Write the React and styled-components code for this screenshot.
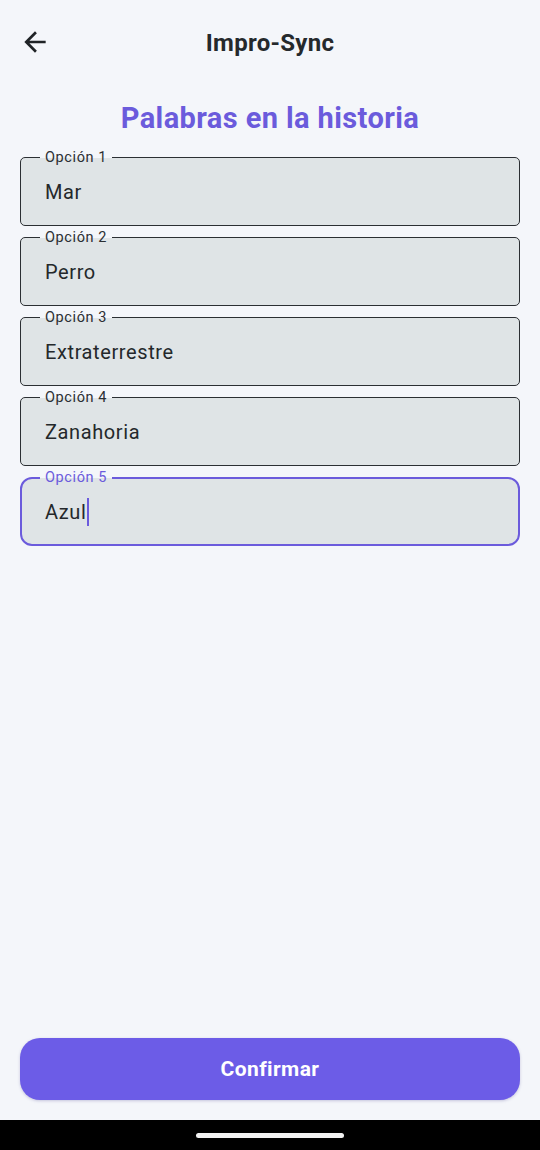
import React from 'react';
import styled, { createGlobalStyle } from 'styled-components';

const GlobalStyle = createGlobalStyle`
    html, body {
        margin: 0;
        padding: 0;
        background-color: #f4f6fa;
        font-family: Roboto, "Noto Sans", sans-serif;
    }
`;

const Screen = styled.div`
    width: 540px;
    height: 1150px;
    display: flex;
    flex-direction: column;
    background-color: #f4f6fa;
    overflow: hidden;
`;

const AppBar = styled.div`
    height: 86px;
    display: flex;
    align-items: center;
    position: relative;
    justify-content: center;
`;

const BackButton = styled.button`
    position: absolute;
    left: 19px;
    top: 26px;
    width: 32px;
    height: 32px;
    padding: 0;
    border: none;
    background: transparent;
    display: flex;
    color: #1f2326;
`;

const AppTitle = styled.h1`
    margin: 0;
    font-size: 24px;
    font-weight: 700;
    color: #25292c;
    letter-spacing: 0.3px;
`;

const Content = styled.div`
    flex: 1;
    display: flex;
    flex-direction: column;
    padding: 0 20px;
`;

const Heading = styled.h2`
    margin: 14px 0 0;
    text-align: center;
    font-size: 29px;
    font-weight: 700;
    color: #6b5bdc;
    line-height: 36px;
    letter-spacing: 0.4px;
`;

const Fields = styled.div`
    display: flex;
    flex-direction: column;
    gap: 11px;
    margin-top: 21px;
`;

const Field = styled.div`
    position: relative;
    height: 69px;
    box-sizing: border-box;
    border: ${(p) => (p.focused ? '2px solid #6b5bdc' : '1px solid #2b2f33')};
    border-radius: ${(p) => (p.focused ? '12px' : '5px')};
    background-color: #dfe4e6;
    display: flex;
    align-items: center;
    padding-left: ${(p) => (p.focused ? '23px' : '24px')};
`;

const Label = styled.span`
    position: absolute;
    top: ${(p) => (p.focused ? '-10px' : '-9px')};
    left: ${(p) => (p.focused ? '18px' : '19px')};
    padding: 0 5px;
    font-size: 14.5px;
    line-height: 18px;
    letter-spacing: 0.6px;
    color: ${(p) => (p.focused ? '#6b5bdc' : '#2b2f33')};
    background: linear-gradient(to bottom, #f4f6fa 50%, #dfe4e6 50%);
`;

const Value = styled.span`
    font-size: 20px;
    color: #24282b;
    letter-spacing: 0.6px;
    display: flex;
    align-items: center;
`;

const Cursor = styled.span`
    display: inline-block;
    width: 2px;
    height: 28px;
    margin-left: 1px;
    background-color: #6b5bdc;
`;

const Footer = styled.div`
    padding: 0 20px 20px;
`;

const ConfirmButton = styled.button`
    width: 100%;
    height: 62px;
    border: none;
    border-radius: 20px;
    background-color: #6c5ce7;
    color: #ffffff;
    font-family: Roboto, sans-serif;
    font-size: 21px;
    font-weight: 700;
    letter-spacing: 0.4px;
    box-shadow: 0 1px 3px rgba(60, 50, 140, 0.25);
`;

const NavBar = styled.div`
    height: 30px;
    background-color: #000;
    display: flex;
    align-items: center;
    justify-content: center;
`;

const Handle = styled.div`
    width: 148px;
    height: 5px;
    border-radius: 3px;
    background-color: #f2f2f2;
`;

const options = ['Mar', 'Perro', 'Extraterrestre', 'Zanahoria', 'Azul'];

const App = () => {
    return (
        <Screen>
            <GlobalStyle />
            <AppBar>
                <BackButton aria-label="Volver">
                    <svg width="32" height="32" viewBox="0 0 24 24" fill="currentColor">
                        <path d="M20 11H7.83l5.59-5.59L12 4l-8 8 8 8 1.41-1.41L7.83 13H20v-2z" />
                    </svg>
                </BackButton>
                <AppTitle>Impro-Sync</AppTitle>
            </AppBar>
            <Content>
                <Heading>Palabras en la historia</Heading>
                <Fields>
                    {options.map((word, i) => {
                        const focused = i === options.length - 1;
                        return (
                            <Field key={word} focused={focused}>
                                <Label focused={focused}>Opción {i + 1}</Label>
                                <Value>
                                    {word}
                                    {focused && <Cursor />}
                                </Value>
                            </Field>
                        );
                    })}
                </Fields>
            </Content>
            <Footer>
                <ConfirmButton>Confirmar</ConfirmButton>
            </Footer>
            <NavBar>
                <Handle />
            </NavBar>
        </Screen>
    );
};

export default App;
